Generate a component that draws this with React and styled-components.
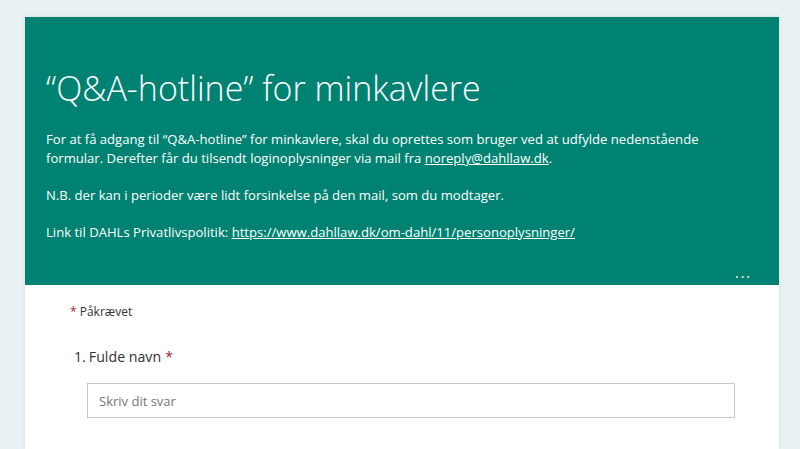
import React from 'react'
import styled, { createGlobalStyle } from 'styled-components'

const GlobalStyle = createGlobalStyle`
  html, body {
    margin: 0;
    padding: 0;
    background: #eaf1f2;
    font-family: "Open Sans", "Noto Sans", sans-serif;
  }
`

function App() {
  return (
    <>
      <GlobalStyle />
      <Page>
        <Card>
          <Header>
            <Title>“Q&amp;A-hotline” for minkavlere</Title>
            <Desc>
              For at få adgang til “Q&amp;A-hotline” for minkavlere, skal du oprettes som bruger ved at udfylde nedenstående
              formular. Derefter får du tilsendt loginoplysninger via mail fra <Link>noreply@dahllaw.dk</Link>.
            </Desc>
            <Desc>N.B. der kan i perioder være lidt forsinkelse på den mail, som du modtager.</Desc>
            <Desc>
              Link til DAHLs Privatlivspolitik: <Link>https://www.dahllaw.dk/om-dahl/11/personoplysninger/</Link>
            </Desc>
            <More>...</More>
          </Header>
          <Body>
            <Required><Star>*</Star> Påkrævet</Required>
            <Question>
              <QNum>1.</QNum>
              <span>Fulde navn</span>
              <Star $big>*</Star>
            </Question>
            <Answer placeholder="Skriv dit svar" />
          </Body>
        </Card>
      </Page>
    </>
  )
}

export default App

const Page = styled.div`
  padding: 17px 21px 0 25px;
  height: 449px;
  box-sizing: border-box;
  overflow: hidden;
`

const Card = styled.div`
  background: #fff;
  box-shadow: 0 0 4px rgba(0, 0, 0, 0.08);
  height: 100%;
`

const Header = styled.div`
  position: relative;
  background: #008272;
  color: #fff;
  padding: 49px 21px 38px;
  height: 268px;
  box-sizing: border-box;
`

const Title = styled.h1`
  margin: 0 0 20px;
  font-family: "Open Sans", sans-serif;
  font-weight: 300;
  font-size: 34px;
  line-height: 44px;
`

const Desc = styled.p`
  margin: 0 0 18px;
  max-width: 670px;
  font-size: 13.1px;
  line-height: 19px;
`

const Link = styled.span`
  text-decoration: underline;
`

const More = styled.div`
  position: absolute;
  right: 27px;
  bottom: 3px;
  font-size: 14px;
  letter-spacing: 2px;
`

const Body = styled.div`
  padding: 18px 45px 0;
`

const Required = styled.div`
  font-size: 12px;
  color: #333;
`

const Star = styled.span`
  color: #a4262c;
  font-size: ${p => (p.$big ? '14px' : '12px')};
  margin-left: ${p => (p.$big ? '4px' : '0')};
`

const Question = styled.div`
  margin: 27px 0 0 4px;
  font-size: 14.2px;
  color: #333;
  display: flex;
  align-items: baseline;
`

const QNum = styled.span`
  margin-right: 3px;
`

const Answer = styled.input`
  display: block;
  margin: 17px 0 0 17px;
  width: 648px;
  height: 35px;
  box-sizing: border-box;
  border: 1px solid #c8c8c8;
  padding: 0 11px;
  font-family: "Open Sans", sans-serif;
  font-size: 13px;
  &::placeholder {
    color: #767676;
  }
`
